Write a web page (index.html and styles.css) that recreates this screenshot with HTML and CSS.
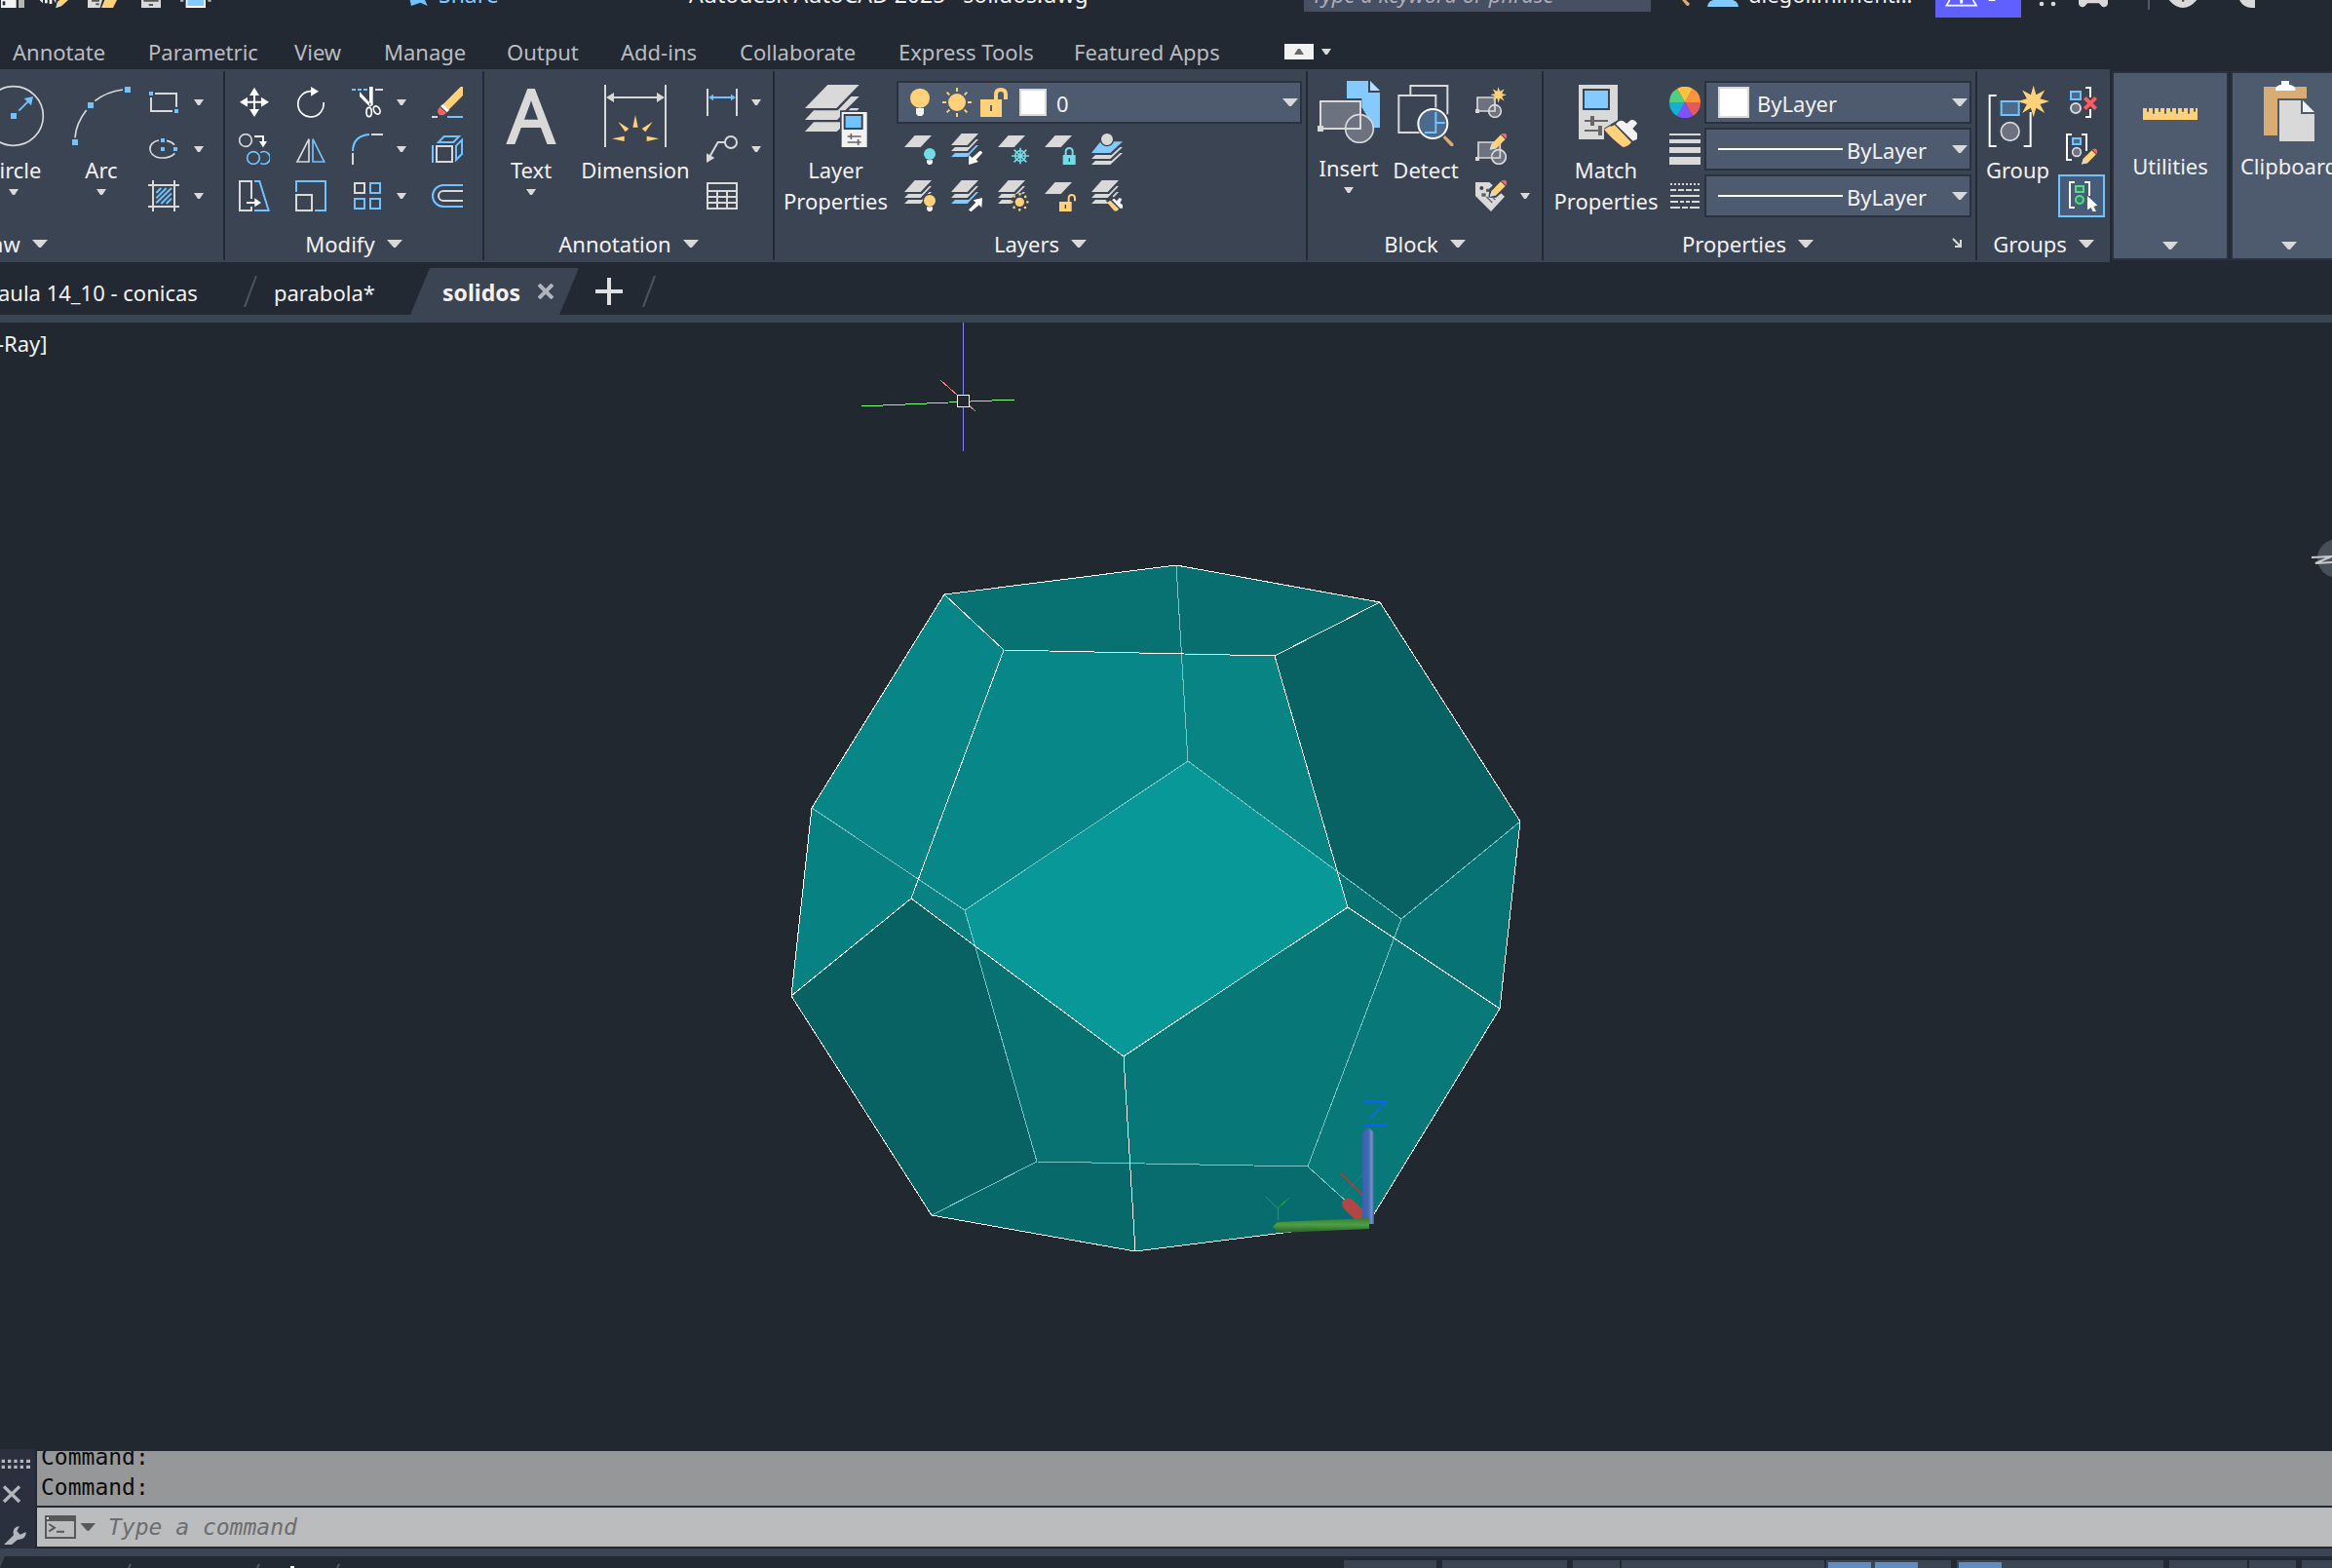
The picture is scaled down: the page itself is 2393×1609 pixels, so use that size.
FILE: index.html
```html
<!DOCTYPE html>
<html lang="en">
<head>
<meta charset="utf-8">
<title>Autodesk AutoCAD 2025 - solidos.dwg</title>
<link rel="stylesheet" href="styles.css">
</head>
<body>
<svg class="defs" aria-hidden="true">
  <defs>
    <symbol id="drop" viewBox="0 0 10 6"><path d="M0 0H10L6 6H4Z" fill="#d9d9d9"/></symbol>
    <symbol id="drop-lg" viewBox="0 0 16 8"><path d="M0 0H16L9 8H7Z" fill="#d9d9d9"/></symbol>
    <symbol id="sheet" viewBox="0 0 84 36"><path d="M0 36L32 0H84L50 36Z" fill="#d9d9d9"/></symbol>
    <symbol id="stack" viewBox="0 0 84 72"><g fill="#d9d9d9"><path d="M0 36L32 0H84L50 36Z"/><path d="M0 54L12 42H54L77 18H84L50 54Z"/><path d="M0 72L12 60H54L77 36H84L50 72Z"/></g></symbol>
    <symbol id="stack-blue" viewBox="0 0 84 72"><g fill="#d9d9d9"><path d="M0 36L32 0H84L50 36Z"/><path d="M0 54L12 42H54L77 18H84L50 54Z"/></g><path d="M0 72L12 60H54L77 36H84L50 72Z" fill="#85caff"/></symbol>
    <symbol id="pencil" viewBox="0 0 54 54"><path d="M0 52L6 34L34 6L48 20L20 48Z" fill="#ffd17a"/><path d="M0 52L6 34L20 48Z" fill="#d9d9d9"/><path d="M36 4Q42 -3 50 3Q57 11 50 18Z" fill="#ff6161"/></symbol>
    <symbol id="star8" viewBox="0 0 96 96"><path d="M48 0L56 28L82 14L68 40L96 48L68 57L82 83L56 68L48 96L40 68L14 83L28 57L0 48L28 40L14 14L40 28Z" fill="#ffd17a"/></symbol>
  </defs>
</svg>

<header class="titlebar">
  <div class="quick">
    <svg width="220" height="8" viewBox="0 0 660 24"><path d="M3 0H50V24H3Z" fill="#f2f2f2"/><path d="M8 4H16V16H8Z" fill="#222933"/><path d="M57 0H75V24H57Z" fill="#b5b5b5"/><path d="M122 0L132 10V0ZM138 0H146V10H138ZM152 0H160V12H152ZM166 0H172V10Z" fill="#f2f2f2"/><path d="M172 24L178 4L184 0H210L190 18Z" fill="#ffd17a"/><path d="M172 24L177 6L188 19Z" fill="#d9d9d9"/><path d="M270 0H315L308 24H270Z" fill="#d9d9d9"/><path d="M282 0H306V5H282ZM295 10H305V16H295Z" fill="#555"/><path d="M312 24L322 0H360L348 24Z" fill="#ffd17a"/><path d="M435 0H495V24H435Z" fill="#d9d9d9"/><path d="M442 0H488V5H442ZM458 12H471V18H458Z" fill="#555"/><path d="M555 0H565V5H555ZM640 0H650V5H640Z" fill="#b5b5b5"/><path d="M572 0H633V24H572Z" fill="#fff"/><path d="M577 0H628V18H577Z" fill="#85caff"/></svg>
  </div>
  <button class="share"><svg width="20" height="8" viewBox="0 0 60 24"><path d="M2 0H48L56 18L34 8L6 18Z" fill="#71c3ff"/></svg>Share</button>
  <h1 class="app-title">Autodesk AutoCAD 2025&nbsp;&nbsp; solidos.dwg</h1>
  <input class="search" type="text" aria-label="Search help" placeholder="Type a keyword or phrase">
  <div class="account">
    <svg width="58" height="8" viewBox="0 0 174 24"><path d="M0 0H12L24 11L20 18L14 17Z" fill="#dbab74"/><path d="M78 21C80 8 86 3 96 0H156C166 3 172 8 174 21Z" fill="#85caff"/></svg>
    <span>diegol.miment...</span>
  </div>
  <button class="trial" aria-label="Trial status"><svg width="88" height="18" viewBox="0 0 264 54"><path d="M44 0L34 17H126L116 0M78 0H82V8H78Z" fill="none" stroke="#fff" stroke-width="5"/><path d="M164 0H184V3H164Z" fill="#fff"/></svg></button>
  <svg width="240" height="12" viewBox="0 0 720 36"><g fill="#d9d9d9"><circle cx="63" cy="12" r="7"/><circle cx="99" cy="12" r="7"/><path d="M177 0H267V12A12 12 0 0 1 245 16L240 10H204L199 16A12 12 0 0 1 177 12Z"/><path d="M455 0H541Q520 24 498 24Q476 24 455 0ZM672 0H762V24H710Q685 24 672 0Z"/></g><path d="M390 0H396V30H390Z" fill="#4e5a6d"/><path d="M495 0H502V5H495Z" fill="#444"/></svg>
</header>

<nav class="menu">
  <button>Annotate</button><button>Parametric</button><button>View</button><button>Manage</button><button>Output</button><button>Add-ins</button><button>Collaborate</button><button>Express Tools</button><button>Featured Apps</button>
  <button class="collapse" aria-label="Minimize ribbon"><svg width="30" height="16" viewBox="0 0 30 16"><path d="M0 0H30V16H0Z" fill="#f2f2f2"/><path d="M10 11L14 5H16L20 11Z" fill="#666"/></svg><svg width="10" height="6"><use href="#drop"/></svg></button>
</nav>

<main class="ribbon">
  <section class="panel draw">
    <div class="body">
      <button class="big circle"><svg width="64" height="64" viewBox="-54 261 192 192"><circle cx="42" cy="357" r="91" fill="none" stroke="#d9d9d9" stroke-width="5"/><path d="M33 348H51V366H33ZM102 297L96 325L87 316L60 343L56 339L83 312L74 303Z" fill="#71c3ff"/></svg><span>Circle</span><svg width="10" height="6"><use href="#drop"/></svg></button>
      <button class="big arc"><svg width="64" height="64" viewBox="222 261 192 192"><path d="M237 424Q240 380 272 339M298 311Q335 282 384 276" fill="none" stroke="#d9d9d9" stroke-width="5"/><path d="M228 429H246V447H228ZM276 315H294V333H276ZM390 267H408V285H390Z" fill="#71c3ff"/></svg><span>Arc</span><svg width="10" height="6"><use href="#drop"/></svg></button>
      <div class="tools cols-draw">
        <button aria-label="Rectangle"><svg width="32" height="32" viewBox="459 267 96 96"><path d="M480 288H546V329M534 342H468V300" fill="none" stroke="#d9d9d9" stroke-width="6"/><path d="M462 282H474V294H462ZM540 336H552V348H540Z" fill="#71c3ff"/></svg></button>
        <button aria-label="Rectangle options"><svg width="10" height="6"><use href="#drop"/></svg></button>
        <button aria-label="Ellipse"><svg width="32" height="32" viewBox="459 411 96 96"><path d="M492 432C455 438 455 480 496 486C520 487 534 480 541 472M516 433Q532 436 540 446" fill="none" stroke="#d9d9d9" stroke-width="5"/><path d="M498 426H510V438H498ZM498 453H510V465H498ZM537 453H549V465H537Z" fill="#71c3ff"/></svg></button>
        <button aria-label="Ellipse options"><svg width="10" height="6"><use href="#drop"/></svg></button>
        <button aria-label="Hatch"><svg width="32" height="32" viewBox="459 555 96 96"><path d="M459 570H555M459 636H555M474 555V651M540 555V651" stroke="#d9d9d9" stroke-width="6"/><path d="M484 594L499 579M484 610L515 579M484 625L531 579M499 627L531 595M515 627L531 611" stroke="#71c3ff" stroke-width="6"/></svg></button>
        <button aria-label="Hatch options"><svg width="10" height="6"><use href="#drop"/></svg></button>
      </div>
    </div>
    <button class="title">Draw<svg width="16" height="8"><use href="#drop-lg"/></svg></button>
  </section>

  <section class="panel">
    <div class="body">
      <div class="tools cols-modify">
        <button aria-label="Move"><svg width="32" height="32" viewBox="735 267 96 96"><path d="M783 269L798 294H786V311H804V299L828 314L804 329V317H786V336H798L783 360L768 336H780V317H762V329L738 314L762 299V311H780V294H768Z" fill="#fff"/></svg></button>
        <button aria-label="Rotate"><svg width="32" height="32" viewBox="909 267 96 96"><path d="M996 315A39.500 39.500 0 1 1 958 281" fill="none" stroke="#fff" stroke-width="5"/><path d="M957 267L981 281L957 296Z" fill="#fff"/></svg></button>
        <button aria-label="Trim"><svg width="32" height="32" viewBox="1083 267 96 96"><path d="M1083 276H1095M1101 276H1113M1119 276H1131" stroke="#71c3ff" stroke-width="6"/><path d="M1155 276H1179" stroke="#d9d9d9" stroke-width="6"/><path d="M1107 282V297L1136 326L1142 320ZM1137 267H1148V324L1137 330Z" fill="#fff"/><ellipse cx="1136" cy="345" rx="8" ry="14" fill="none" stroke="#fff" stroke-width="5"/><ellipse cx="1160" cy="339" rx="9" ry="13" transform="rotate(-30 1160 339)" fill="none" stroke="#fff" stroke-width="5"/></svg></button>
        <button aria-label="Trim options"><svg width="10" height="6"><use href="#drop"/></svg></button>
        <button aria-label="Erase"><svg width="32" height="32" viewBox="1329 267 96 96"><path d="M1425 267V294L1381 338L1364 321L1418 267Z" fill="#ffd17a"/><path d="M1364 320L1383 339L1376 346L1356 327Z" fill="#fff"/><path d="M1354 329Q1343 340 1350 350Q1360 361 1374 348Z" fill="#ff6161"/><path d="M1329 360H1347" stroke="#d9d9d9" stroke-width="6"/><path d="M1377 360H1425" stroke="#71c3ff" stroke-width="6"/></svg></button>

        <button aria-label="Copy"><svg width="32" height="32" viewBox="735 411 96 96"><circle cx="756" cy="432" r="19" fill="none" stroke="#d9d9d9" stroke-width="5"/><path d="M783 420H810V435" fill="none" stroke="#fff" stroke-width="6"/><path d="M798 435H822L810 454Z" fill="#fff"/><circle cx="780" cy="486" r="19" fill="none" stroke="#71c3ff" stroke-width="5"/><path d="M802 470A19 19 0 1 1 802 502" fill="none" stroke="#71c3ff" stroke-width="5"/></svg></button>
        <button aria-label="Mirror"><svg width="32" height="32" viewBox="909 411 96 96"><path d="M951 428V498H915Z" fill="none" stroke="#d9d9d9" stroke-width="5"/><path d="M963 428V498H998Z" fill="none" stroke="#71c3ff" stroke-width="5"/></svg></button>
        <button aria-label="Fillet"><svg width="32" height="32" viewBox="1083 411 96 96"><path d="M1086 465Q1087 418 1137 414" fill="none" stroke="#71c3ff" stroke-width="6"/><path d="M1143 414H1179M1086 471V507" stroke="#d9d9d9" stroke-width="6"/></svg></button>
        <button aria-label="Fillet options"><svg width="10" height="6"><use href="#drop"/></svg></button>
        <button aria-label="Explode"><svg width="32" height="32" viewBox="1329 411 96 96"><path d="M1344 450H1392V498H1344Z" fill="none" stroke="#d9d9d9" stroke-width="6"/><path d="M1332 447V501M1350 438L1367 420H1413L1396 438ZM1404 449L1422 431V474L1404 492Z" fill="none" stroke="#71c3ff" stroke-width="6"/></svg></button>

        <button aria-label="Stretch"><svg width="32" height="32" viewBox="735 555 96 96"><path d="M774 612V558H738V648H774V636" fill="none" stroke="#d9d9d9" stroke-width="6"/><path d="M783 558H799L827 648H783" fill="none" stroke="#71c3ff" stroke-width="6"/><path d="M759 621H784V610L804 624L784 637V627H759Z" fill="#fff"/></svg></button>
        <button aria-label="Scale"><svg width="32" height="32" viewBox="909 555 96 96"><path d="M912 591V558H1002V648H969" fill="none" stroke="#71c3ff" stroke-width="6"/><path d="M912 600H960V648H912Z" fill="none" stroke="#d9d9d9" stroke-width="6"/></svg></button>
        <button aria-label="Array"><svg width="32" height="32" viewBox="1083 555 96 96"><path d="M1092 564H1122V594H1092Z" fill="none" stroke="#d9d9d9" stroke-width="6"/><path d="M1140 564H1170V594H1140ZM1092 612H1122V642H1092ZM1140 612H1170V642H1140Z" fill="none" stroke="#71c3ff" stroke-width="6"/></svg></button>
        <button aria-label="Array options"><svg width="10" height="6"><use href="#drop"/></svg></button>
        <button aria-label="Offset"><svg width="32" height="32" viewBox="1329 555 96 96"><path d="M1425 570H1365A33 33 0 0 0 1365 636H1425" fill="none" stroke="#71c3ff" stroke-width="6"/><path d="M1425 588H1365A15 15 0 0 0 1365 618H1425" fill="none" stroke="#d9d9d9" stroke-width="6"/></svg></button>
      </div>
    </div>
    <button class="title">Modify<svg width="16" height="8"><use href="#drop-lg"/></svg></button>
  </section>

  <section class="panel annotation">
    <div class="body">
      <button class="big w96"><svg width="64" height="64" viewBox="0 0 64 64"><text class="glyph" x="32" y="60" text-anchor="middle">A</text></svg><span>Text</span><svg width="10" height="6"><use href="#drop"/></svg></button>
      <button class="big w118"><svg width="64" height="64" viewBox="420 261 192 192"><path d="M423 261V453M609 261V453M440 300H592" stroke="#d9d9d9" stroke-width="6"/><path d="M426 300L450 285V315ZM606 300L582 285V315Z" fill="#d9d9d9"/><path d="M516 354L524 392H508ZM463 375L496 396L485 406ZM569 375L547 406L536 396ZM444 427L482 419V435ZM589 427L551 419V435Z" fill="#ffd17a"/></svg><span>Dimension</span></button>
      <div class="tools cols-side">
        <button aria-label="Linear"><svg width="32" height="32" viewBox="735 267 96 96"><path d="M738 273V357M828 273V357" stroke="#d9d9d9" stroke-width="6"/><path d="M741 300L756 290V297H810V290L825 300L810 310V303H756V310Z" fill="#71c3ff"/></svg></button>
        <button aria-label="Linear options"><svg width="10" height="6"><use href="#drop"/></svg></button>
        <button aria-label="Leader"><svg width="32" height="32" viewBox="735 411 96 96"><circle cx="810" cy="438" r="18" fill="none" stroke="#d9d9d9" stroke-width="6"/><path d="M790 438H770L746 480" fill="none" stroke="#d9d9d9" stroke-width="6"/><path d="M735 472L760 486L735 501Z" fill="#d9d9d9"/></svg></button>
        <button aria-label="Leader options"><svg width="10" height="6"><use href="#drop"/></svg></button>
        <button aria-label="Table"><svg width="32" height="32" viewBox="735 555 96 96"><path d="M738 564H828V642H738ZM738 588H828M738 606H828M738 624H828M768 588V642M798 588V642" fill="none" stroke="#d9d9d9" stroke-width="6"/></svg></button>
      </div>
    </div>
    <button class="title">Annotation<svg width="16" height="8"><use href="#drop-lg"/></svg></button>
  </section>

  <section class="panel layers">
    <div class="body">
      <button class="big w125"><svg width="64" height="64" viewBox="1042 261 192 192"><g fill="#d9d9d9"><path d="M1042 333L1112 261H1209L1139 333ZM1042 369L1069 340H1143L1184 297H1209L1166 340H1150V360L1141 369ZM1042 405L1069 376H1150V396L1140 405ZM1176 340L1183 333H1209L1203 340Z"/></g><path d="M1155 345H1233V453H1155Z" fill="#f2f2f2"/><path d="M1164 354H1218V396H1164Z" fill="#71c3ff" stroke="#3b4453" stroke-width="6"/><path d="M1173 420H1215M1173 438H1215" stroke="#666" stroke-width="5"/><path d="M1184 411V429M1206 429V447" stroke="#666" stroke-width="5"/></svg><span>Layer<br>Properties</span></button>
      <div class="layer-tools">
        <label class="combo layer-combo">
          <svg width="144" height="32" viewBox="102 267 432 96"><circle cx="132" cy="302" r="30" fill="#ffd17a"/><path d="M120 333H144V350L138 357H126L120 350Z" fill="#f2f2f2"/><circle cx="246" cy="315" r="27" fill="#ffd17a"/><path d="M201 315H213M279 315H291M246 270V282M246 348V360M215 284L223 292M277 284L269 292M215 346L223 338M277 346L269 338" stroke="#ffd17a" stroke-width="6"/><path d="M318 306H360V291Q360 270 381 270Q402 270 402 291V306H390V291Q390 282 381 282Q372 282 372 291V306H384V360H318Z" fill="#ffd17a"/><path d="M348 324H354V342H348Z" fill="#4e5a6d"/><path d="M441 276H519V354H441Z" fill="#fff" stroke="#d9d9d9" stroke-width="6"/></svg>
          <select aria-label="Layer"><option>0</option></select>
          <svg width="16" height="8"><use href="#drop-lg"/></svg>
        </label>
        <div class="tools cols-layers">
          <button aria-label="Layer off"><svg width="32" height="32" viewBox="0 0 96 96"><use href="#sheet" y="6" width="84" height="36"/><circle cx="78" cy="63" r="18" fill="#71dbe6"/><path d="M69 82H87V90L82 96H74L69 90Z" fill="#f2f2f2"/></svg></button>
          <button aria-label="Isolate"><svg width="32" height="32" viewBox="0 0 96 96"><use href="#stack-blue" width="84" height="72"/><path d="M92 54L97 59L77 80L84 87L54 96L55 66L65 75L88 54Z" fill="#fff"/></svg></button>
          <button aria-label="Freeze"><svg width="32" height="32" viewBox="0 0 96 96"><use href="#sheet" y="6" width="84" height="36"/><g stroke="#71dbe6" stroke-width="5" fill="none"><path d="M69 44V94M42 69H96M50 50L88 88M88 50L50 88"/><circle cx="69" cy="69" r="16"/></g></svg></button>
          <button aria-label="Lock"><svg width="32" height="32" viewBox="0 0 96 96"><use href="#sheet" y="6" width="84" height="36"/><path d="M56 66H95V96H56Z" fill="#71dbe6"/><path d="M65 66V54Q66 45 76 45Q85 45 86 54V66" fill="none" stroke="#71dbe6" stroke-width="6"/><path d="M76 76V87" stroke="#3b4453" stroke-width="4"/></svg></button>
          <button aria-label="Make current"><svg width="32" height="32" viewBox="0 0 96 96"><path d="M0 60L28 25H96L58 60Z" fill="#85caff"/><path d="M0 78L12 66H62L88 42H96L58 78ZM0 96L12 84H62L88 60H96L58 96Z" fill="#d9d9d9"/><circle cx="48" cy="18" r="20" fill="#d9d9d9" stroke="#3b4453" stroke-width="4"/></svg></button>

          <button aria-label="Turn all layers on"><svg width="32" height="32" viewBox="0 0 96 96"><use href="#stack" width="84" height="72"/><circle cx="78" cy="63" r="20" fill="#ffd17a" stroke="#3b4453" stroke-width="4"/><path d="M69 82H87V90L82 96H74L69 90Z" fill="#f2f2f2"/></svg></button>
          <button aria-label="Unisolate"><svg width="32" height="32" viewBox="0 0 96 96"><use href="#stack-blue" width="84" height="72"/><path d="M96 54L94 84L86 76L61 97L54 91L76 68L68 61Z" fill="#fff"/></svg></button>
          <button aria-label="Thaw all layers"><svg width="32" height="32" viewBox="0 0 96 96"><use href="#stack" width="84" height="72"/><circle cx="67" cy="67" r="27" fill="#3b4453"/><circle cx="67" cy="67" r="14" fill="#ffd17a"/><circle cx="67" cy="67" r="24" fill="none" stroke="#ffd17a" stroke-width="8" stroke-dasharray="0 18.850" stroke-linecap="round"/></svg></button>
          <button aria-label="Unlock"><svg width="32" height="32" viewBox="0 0 96 96"><use href="#sheet" y="6" width="84" height="36"/><path d="M45 66H83V96H45Z" fill="#ffd17a"/><path d="M74 66V54Q75 45 83 45Q92 45 93 54V64" fill="none" stroke="#ffd17a" stroke-width="6"/><path d="M64 75V87" stroke="#3b4453" stroke-width="4"/></svg></button>
          <button aria-label="Match layer"><svg width="32" height="32" viewBox="0 0 96 96"><use href="#stack" width="84" height="72"/><path d="M44 62L64 48L98 80V96H74Z" fill="#3b4453"/><path d="M48 68L58 62L84 88Q80 98 70 94Z" fill="#ffd17a"/><path d="M63 60L70 56L78 64L86 54L94 58L88 70L96 76V86L88 86Z" fill="#f2f2f2"/></svg></button>
        </div>
      </div>
    </div>
    <button class="title">Layers<svg width="16" height="8"><use href="#drop-lg"/></svg></button>
  </section>

  <section class="panel block">
    <div class="body">
      <button class="big raised w84"><svg width="64" height="64" viewBox="36 249 192 192"><path d="M126 249H192V285H228V393H210L172 330V303H126Z" fill="#85caff"/><path d="M198 249L228 279H198Z" fill="#b9deff"/><path d="M45 312H168V396H45Z" fill="#6c7280" stroke="#d9d9d9" stroke-width="6"/><circle cx="165" cy="396" r="43" fill="#6c7280" stroke="#d9d9d9" stroke-width="5"/><path d="M168 352V396H123" fill="none" stroke="#d9d9d9" stroke-width="6"/><path d="M36 387H54V405H36Z" fill="#d9d9d9"/></svg><span>Insert</span><svg width="10" height="6"><use href="#drop"/></svg></button>
      <button class="big w74"><svg width="64" height="64" viewBox="275 261 192 192"><path d="M324 291V264H438V352M288 294H402V408H288Z" fill="none" stroke="#d9d9d9" stroke-width="6"/><circle cx="393" cy="381" r="50" fill="#3b4453"/><circle cx="393" cy="381" r="45" fill="#4b6a8c" stroke="#fff" stroke-width="6"/><path d="M402 345V408H368M402 378H430" fill="none" stroke="#71c3ff" stroke-width="6"/><path d="M424 424L430 417L456 442V450H448Z" fill="#dbab74"/></svg><span>Detect</span></button>
      <div class="tools cols-side">
        <button aria-label="Create block"><svg width="32" height="32" viewBox="522 267 96 96"><path d="M528 300H582V342H528Z" fill="#6c7280" stroke="#d9d9d9" stroke-width="5"/><circle cx="582" cy="342" r="19" fill="#6c7280" stroke="#d9d9d9" stroke-width="5"/><path d="M582 318V342H560" fill="none" stroke="#d9d9d9" stroke-width="5"/><path d="M522 336H534V348H522Z" fill="#d9d9d9"/><use href="#star8" x="568" y="267" width="50" height="50"/></svg></button><span></span>
        <button aria-label="Edit block"><svg width="32" height="32" viewBox="522 411 96 96"><path d="M531 438H598V486H531Z" fill="#6c7280" stroke="#d9d9d9" stroke-width="5"/><circle cx="594" cy="483" r="22" fill="#6c7280" stroke="#d9d9d9" stroke-width="5"/><path d="M598 460V486H574" fill="none" stroke="#d9d9d9" stroke-width="5"/><path d="M522 483H534V495H522Z" fill="#d9d9d9"/><use href="#pencil" x="566" y="409" width="54" height="54"/></svg></button><span></span>
        <button aria-label="Edit attributes"><svg width="32" height="32" viewBox="522 555 96 96"><path d="M522 561H565L612 605L570 651L522 603Z" fill="#d9d9d9"/><circle cx="541" cy="579" r="6" fill="#3b4453"/><path d="M543 597H552V603H543ZM557 583H566V589H557ZM556 606L574 624M574 606L583 615" fill="#3b4453" stroke="#666" stroke-width="4"/><path d="M562 608L566 580L598 549L622 575L586 608Z" fill="#3b4453"/><use href="#pencil" x="566" y="553" width="54" height="54"/></svg></button>
        <button aria-label="Attribute options"><svg width="10" height="6"><use href="#drop"/></svg></button>
      </div>
    </div>
    <button class="title">Block<svg width="16" height="8"><use href="#drop-lg"/></svg></button>
  </section>

  <section class="panel properties">
    <div class="body">
      <button class="big w128"><svg width="64" height="64" viewBox="828 261 192 192"><path d="M840 261H960V370L918 395V429H840Z" fill="#d9d9d9"/><path d="M855 276H933V336H855Z" fill="#85caff" stroke="#3b4453" stroke-width="6"/><path d="M858 372H930M858 402H912" stroke="#666" stroke-width="6"/><path d="M882 357V387M906 387V417" stroke="#666" stroke-width="12"/><path d="M918 398L936 388Q942 390 950 384L1002 438Q992 452 976 453Q940 425 918 398Z" fill="#ffd17a"/><path d="M954 382Q964 368 976 372L988 380L1000 370Q1012 366 1020 380L1006 396L1020 410V428L1007 434Z" fill="#f2f2f2"/></svg><span>Match<br>Properties</span></button>
      <div class="props">
        <svg width="32" height="32" viewBox="-48 -48 96 96"><path d="M0 0L-24 -42A48 48 0 0 1 24 -42Z" fill="#ffc23e"/><path d="M0 0L24 -42A48 48 0 0 1 48 0Z" fill="#ff9440"/><path d="M0 0H48A48 48 0 0 1 24 42Z" fill="#e65a5a"/><path d="M0 0L24 42A48 48 0 0 1 -24 42Z" fill="#8250ff"/><path d="M0 0L-24 42A48 48 0 0 1 -48 0Z" fill="#14b0cf"/><path d="M0 0H-48A48 48 0 0 1 -24 -42Z" fill="#52ce82"/></svg>
        <label class="combo"><i class="swatch"></i><select aria-label="Object color"><option>ByLayer</option></select><svg width="16" height="8"><use href="#drop-lg"/></svg></label>
        <svg width="32" height="32" viewBox="0 0 32 32"><path d="M0 0H32V2H0ZM0 6H32V10H0ZM0 14H32V20H0ZM0 24H32V32H0Z" fill="#d9d9d9"/></svg>
        <label class="combo"><i class="line"></i><select class="narrow" aria-label="Lineweight"><option>ByLayer</option></select><svg width="16" height="8"><use href="#drop-lg"/></svg></label>
        <svg width="32" height="32" viewBox="0 0 32 32"><g stroke="#d9d9d9" stroke-width="2"><path d="M1 4H31" stroke-dasharray="2 2"/><path d="M1 10H31" stroke-dasharray="6 2"/><path d="M1 16H31"/><path d="M1 22H31" stroke-dasharray="8 2 4 2 4 2"/><path d="M1 28H31" stroke-dasharray="10 2 6 2"/></g></svg>
        <label class="combo"><i class="line"></i><select class="narrow" aria-label="Linetype"><option>ByLayer</option></select><svg width="16" height="8"><use href="#drop-lg"/></svg></label>
      </div>
    </div>
    <div class="title-row">
      <button class="title">Properties<svg width="16" height="8"><use href="#drop-lg"/></svg></button>
      <button class="launcher" aria-label="Properties palette"><svg width="10" height="10" viewBox="0 0 10 10"><path d="M1 1L8 8M3 9H9V2" fill="none" stroke="#d9d9d9" stroke-width="2"/></svg></button>
    </div>
  </section>

  <section class="panel groups">
    <div class="body">
      <button class="big w83"><svg width="64" height="64" viewBox="58 261 192 192"><path d="M87 294H66V450H87M171 450H192V345" fill="none" stroke="#fff" stroke-width="6"/><path d="M102 312H156V354H102Z" fill="#4b6a8c" stroke="#71c3ff" stroke-width="6"/><circle cx="129" cy="405" r="28" fill="#6c7280" stroke="#d9d9d9" stroke-width="5"/><use href="#star8" x="152" y="263" width="98" height="98"/></svg><span>Group</span></button>
      <div class="tools cols-groups">
        <button aria-label="Ungroup"><svg width="32" height="32" viewBox="303 267 96 96"><path d="M363 270H378V300M378 336V360H363" fill="none" stroke="#fff" stroke-width="6"/><path d="M318 282H348V306H318Z" fill="#4b6a8c" stroke="#71c3ff" stroke-width="6"/><circle cx="333" cy="333" r="15" fill="#6c7280" stroke="#d9d9d9" stroke-width="6"/><path d="M361 301L395 335M395 301L361 335" stroke="#ff5c5c" stroke-width="12"/></svg></button>
        <button aria-label="Group edit"><svg width="32" height="32" viewBox="303 411 96 96"><path d="M321 414H306V492H321M351 414H366V465" fill="none" stroke="#fff" stroke-width="6"/><path d="M324 426H348V444H324Z" fill="#4b6a8c" stroke="#71c3ff" stroke-width="6"/><circle cx="336" cy="468" r="13" fill="#6c7280" stroke="#d9d9d9" stroke-width="5"/><use href="#pencil" x="351" y="457" width="50" height="50"/></svg></button>
        <button class="active" aria-label="Group selection"><svg width="32" height="32" viewBox="300 552 96 96"><path d="M327 558H312V636H327M357 558H372V600" fill="none" stroke="#fff" stroke-width="6"/><path d="M330 570H354V588H330Z" fill="#3d7a72" stroke="#58d888" stroke-width="6"/><circle cx="342" cy="612" r="12" fill="#3d7a72" stroke="#58d888" stroke-width="6"/><path d="M366 600L398 630L385 632L393 648L384 651L377 636L366 643Z" fill="#fff"/></svg></button>
      </div>
    </div>
    <button class="title">Groups<svg width="16" height="8"><use href="#drop-lg"/></svg></button>
  </section>

  <section class="folded">
    <button class="big"><svg width="64" height="64" viewBox="525 243 192 192"><path d="M537 333H549V344H555V333H567V350H573V333H585V344H591V333H603V350H609V333H621V344H627V333H639V350H645V333H657V344H663V333H675V350H681V333H693V344H699V333H705V369H537Z" fill="#ffd17a"/></svg><span>Utilities</span><svg width="16" height="8"><use href="#drop-lg"/></svg></button>
  </section>
  <section class="folded">
    <button class="big"><svg width="64" height="64" viewBox="891 243 192 192"><path d="M909 267H1041V303H951V417H909Z" fill="#d8ad75"/><path d="M945 273Q948 262 963 261V249H987V261Q1002 262 1006 273V279H945Z" fill="#fff"/><path d="M957 309H1023V351H1065V441H957Z" fill="#d9d9d9"/><path d="M1029 309L1065 345H1029Z" fill="#f2f2f2"/></svg><span>Clipboard</span><svg width="16" height="8"><use href="#drop-lg"/></svg></button>
  </section>
</main>

<nav class="doc-tabs">
  <button class="doc first">aula 14_10 - conicas</button>
  <svg width="14" height="32" viewBox="0 0 14 32"><path d="M1 32L13 0" stroke="#4b5563" stroke-width="2"/></svg>
  <button class="doc second">parabola*</button>
  <div class="doc-active"><button class="doc">solidos</button><button aria-label="Close solidos"><svg width="16" height="16" viewBox="0 0 16 16"><path d="M1 1L15 15M15 1L1 15" stroke="#b0b5bd" stroke-width="4"/></svg></button></div>
  <button class="new-tab" aria-label="New drawing"><svg width="28" height="28" viewBox="0 0 28 28"><path d="M14 0V28M0 14H28" stroke="#e0e0e0" stroke-width="4"/></svg></button>
  <svg width="14" height="32" viewBox="0 0 14 32"><path d="M1 32L13 0" stroke="#4b5563" stroke-width="2"/></svg>
</nav>

<section class="viewport">
  <button class="view-style">-Ray]</button>
  <svg class="canvas" viewBox="0 331 2393 1156">
    <g shape-rendering="crispEdges">
      <path d="M969 610L1207 580L1213 670L1030 667Z" fill="#087172"/>
      <path d="M1207 580L1416 618L1308 673L1213 670Z" fill="#086e6f"/>
      <path d="M969 610L1030 667L942 901L833 829Z" fill="#088586"/>
      <path d="M833 829L942 901L935 922L812 1022Z" fill="#088182"/>
      <path d="M1030 667L1213 670L1219 781L990 934L942 901Z" fill="#088788"/>
      <path d="M942 901L990 934L1000 971L935 922Z" fill="#088283"/>
      <path d="M1213 670L1308 673L1372 893L1219 781Z" fill="#088485"/>
      <path d="M1219 781L1372 893L1383 931L1153 1084L1000 971L990 934Z" fill="#089898"/>
      <path d="M1308 673L1416 618L1560 843L1438 943L1372 893Z" fill="#086162"/>
      <path d="M1372 893L1438 943L1430 962L1383 931Z" fill="#087273"/>
      <path d="M1438 943L1560 843L1539 1035L1430 962Z" fill="#087374"/>
      <path d="M935 922L1000 971L1064 1192L956 1247L812 1022Z" fill="#086162"/>
      <path d="M1000 971L1153 1084L1159 1195L1064 1192Z" fill="#087172"/>
      <path d="M1064 1192L1159 1195L1165 1284L956 1247Z" fill="#08696b"/>
      <path d="M1153 1084L1383 931L1430 962L1342 1197L1159 1195Z" fill="#087778"/>
      <path d="M1430 962L1539 1035L1405 1254L1342 1197Z" fill="#087879"/>
      <path d="M1159 1195L1342 1197L1405 1254L1165 1284Z" fill="#086c6e"/>
      <g fill="none" stroke="#7dc4c4">
        <path d="M1207 580L1219 781L990 934L833 829M1219 781L1438 943L1560 843M990 934L1064 1192L956 1247M1064 1192L1342 1197L1438 943M1342 1197L1405 1254"/>
      </g>
      <g fill="none" stroke="#fff">
        <path d="M1207 580L1416 618L1560 843L1539 1035L1405 1254L1165 1284L956 1247L812 1022L833 829L969 610ZM969 610L1030 667L1308 673L1416 618M1030 667L935 922L812 1022M935 922L1153 1084L1383 931L1308 673M1383 931L1539 1035M1153 1084L1165 1284"/>
      </g>
      <path d="M988.500 331V463" stroke="#8383ff"/>
      <path d="M884 417L1041 410" stroke="#83ff83"/>
      <path d="M965 390L1001 422" stroke="#ff8383"/>
      <path d="M982.500 405.500H994.500V417.500H982.500Z" fill="#212830" stroke="#fff"/>
      <g fill="none"><path d="M1399 1130H1423L1400 1154H1423" stroke="#0a66ff"/><path d="M1376 1204L1398 1226M1398 1206L1376 1228" stroke="#e0302a"/><path d="M1299 1228L1311 1240L1323 1229M1311 1240V1252" stroke="#18a82c"/></g>
    </g>
    <defs>
      <linearGradient id="axis-z"><stop offset="0" stop-color="#3b62a8"/><stop offset=".5" stop-color="#4169b4"/><stop offset=".8" stop-color="#7491c8"/><stop offset="1" stop-color="#45598a"/></linearGradient>
      <linearGradient id="axis-y" x2="0" y2="1"><stop offset="0" stop-color="#3c7a34"/><stop offset=".45" stop-color="#4ba145"/><stop offset="1" stop-color="#2c5a28"/></linearGradient>
    </defs>
    <path d="M1377 1233L1383 1229L1388 1231L1402 1245L1396 1252H1391L1378 1239Z" fill="#b04747"/>
    <path d="M1398 1162L1404 1157L1410 1162V1256H1398Z" fill="url(#axis-z)"/>
    <path d="M1306 1259L1311 1254L1405 1250V1261L1313 1265Z" fill="url(#axis-y)"/>
    <ellipse cx="2399" cy="573" rx="21" ry="20" fill="#474f58"/>
    <path d="M2372 572L2393 571L2376 578L2393 577" fill="none" stroke="#c8cacc" stroke-width="2"/>
  </svg>
</section>

<section class="command">
  <div class="grip">
    <svg width="36" height="102" viewBox="0 0 108 306"><g fill="#b3b6bc"><path d="M5 32H15V42H5ZM24 32H34V42H24ZM43 32H53V42H43ZM62 32H72V42H62ZM81 32H93V42H81ZM5 50H15V60H5ZM24 50H34V60H24ZM43 50H53V60H43ZM62 50H72V60H62ZM81 50H93V60H81Z"/><path d="M12 294L42 265Q36 240 60 237L52 252L62 263L80 255Q82 278 54 279L36 294Z"/></g><path d="M12 115L60 162M60 115L12 162" stroke="#b3b6bc" stroke-width="10"/></svg>
  </div>
  <div class="console">
    <div class="history"><p>Command:</p><p>Command:</p></div>
    <div class="prompt">
      <button aria-label="Recent commands"><svg width="52" height="24" viewBox="0 0 156 72"><path d="M0 0H96V72H0Z" fill="#58595b"/><path d="M6 18H90V66H6Z" fill="#bbbcbe"/><path d="M6 6H12V12H6Z" fill="#fff"/><path d="M13 27L30 38L13 49M36 50H60" fill="none" stroke="#58595b" stroke-width="6"/><path d="M109 24H156L136 47H130Z" fill="#58595b"/></svg></button>
      <input type="text" aria-label="Command line" placeholder="Type a command">
    </div>
  </div>
</section>

<footer class="status">
  <svg class="layout-tabs" width="360" height="12" viewBox="0 0 360 12"><path d="M0 0H5L0 12Z" fill="#3b4453"/><path d="M134 8L132 12M266 8L264 12M348 8L346 12" stroke="#4e5a6d" stroke-width="2"/><path d="M298 10H302V12H298Z" fill="#fff"/></svg>
  <div class="modes">
    <span class="w95"></span><span class="w128"></span><span class="w48 tight"></span><span class="w208 tight"></span>
    <span class="w128"><b></b><b></b></span><span class="w212"><b></b></span><span class="w80 tight"></span><span class="w48"></span><span class="w48"></span>
  </div>
</footer>
</body>
</html>
```
FILE: styles.css
```css
* { box-sizing: border-box; }

body {
  margin: 0;
  min-height: 100vh;
  display: flex;
  flex-direction: column;
  overflow: hidden;
  background: #222933;
  color: #f2f2f2;
  font: 22px/32px "Noto Sans", "Open Sans", sans-serif;
}

button, select, input {
  margin: 0;
  padding: 0;
  border: 0;
  background: none;
  color: inherit;
  font: inherit;
}

svg { display: block; flex: none; }
.defs { position: absolute; width: 0; height: 0; }

/* Title bar, partly scrolled off the top edge */
.titlebar {
  display: flex;
  align-items: center;
  height: 48px;
  margin-top: -30px;
  white-space: nowrap;
  flex: none;
}
.titlebar > svg, .quick, .share svg, .account svg { align-self: flex-end; margin-bottom: 10px; }
.titlebar > svg { margin-bottom: 6px; }
.quick { width: 420px; }
.share { display: flex; align-items: center; gap: 10px; height: 48px; width: 287px; color: #85caff; font-size: 23px; }
.app-title { margin: 0; width: 631px; font-size: 23px; font-weight: 400; }
.search {
  width: 356px;
  height: 36px;
  padding: 0 8px;
  background: #474f63;
  font-style: italic;
}
.search::placeholder { color: #a9aeb8; opacity: 1; }
.account { display: flex; align-items: center; gap: 10px; height: 48px; width: 292px; padding-left: 32px; }
.trial { display: flex; align-items: flex-end; width: 88px; height: 48px; background: #5f60ff; }

.menu {
  display: grid;
  grid-template-columns: 139px 150px 92px 126px 117px 122px 163px 180px 216px auto;
  align-items: center;
  justify-content: start;
  height: 53px;
  padding: 16px 0 0 13px;
  color: #b9bcc0;
  flex: none;
}
.menu button { text-align: left; white-space: nowrap; }
.menu .collapse { display: flex; align-items: center; gap: 8px; }

/* Ribbon */
.ribbon {
  display: flex;
  height: 198px;
  padding: 2px 0;
  background: #3b4453;
  overflow: hidden;
  flex: none;
}
.panel {
  display: flex;
  flex-direction: column;
  flex: none;
  width: 266px;
  border-right: 2px solid #222933;
}
.draw { width: 231px; overflow: hidden; }
.annotation { width: 298px; }
.layers { width: 547px; }
.block { width: 242px; }
.properties { width: 445px; }
.groups { width: 138px; }

.body { display: flex; height: 152px; padding-top: 8px; }
.title {
  display: flex;
  align-items: center;
  justify-content: center;
  gap: 12px;
  height: 42px;
  padding-top: 7px;
}
.draw .title { margin-left: -214px; }
.title-row { display: flex; }
.title-row .title { flex: 1; }
.launcher { width: 24px; padding-top: 6px; }

.big {
  display: flex;
  flex-direction: column;
  align-items: center;
  flex: none;
  width: 100px;
  padding-top: 6px;
  text-align: center;
}
.big span { margin-top: 7px; }
.big span + svg { margin-top: 4px; }
.big.raised { padding-top: 2px; }
.big.raised span, .folded .big span { margin-top: 9px; }
.glyph { font: 76px "Noto Sans", sans-serif; fill: #d9d9d9; stroke: #d9d9d9; stroke-width: 2px; }
.big.circle { margin-left: -36px; }
.big.arc { width: 80px; }
.w74 { width: 74px; }
.w83 { width: 83px; }
.w84 { width: 84px; }
.w96 { width: 96px; }
.w118 { width: 118px; }
.w125 { width: 125px; }
.w128 { width: 128px; }

.tools { display: grid; grid-auto-rows: 48px; align-content: start; }
.tools button { display: grid; place-items: center; }
.cols-draw { grid-template-columns: 48px 24px; }
.cols-modify { grid-template-columns: 58px 58px 58px 12px 82px; padding-left: 1px; }
.cols-side { grid-template-columns: 60px 10px; }
.cols-layers { grid-template-columns: repeat(5, 48px); }
.cols-groups { grid-template-columns: 48px; }
.tools .active { align-self: center; height: 44px; background: #465c78; border: 2px solid #71c3ff; }

.combo {
  display: flex;
  align-items: center;
  height: 44px;
  padding: 0 2px 0 12px;
  background: #4e5a6d;
  border: 2px solid #2b323f;
}
.combo select { flex: 1; min-width: 0; appearance: none; padding-top: 2px; outline: 0; }
.combo .narrow { flex: none; width: 108px; }
.combo option { background: #4e5a6d; }
.layer-tools { width: 416px; padding-top: 2px; }
.layer-combo { margin-bottom: 2px; }
.layer-combo select { padding-left: 6px; }

.props {
  display: grid;
  grid-template-columns: 32px 274px;
  gap: 4px;
  align-items: center;
  align-content: start;
  padding: 2px 0 0 1px;
}
.swatch { width: 32px; height: 32px; margin-right: 8px; background: #fff; border: 2px solid #d9d9d9; }
.line { flex: none; width: 128px; height: 2px; margin-right: 4px; background: #fff; }

.folded {
  flex: none;
  width: 120px;
  margin-right: 2px;
  background: #4e5a6d;
  border: 2px solid #2b323f;
  outline: 2px solid #222933;
}
.folded .big { width: 100%; height: 190px; }
.folded .big span + svg { margin-top: 62px; }

/* Drawing tabs */
.doc-tabs {
  display: flex;
  align-items: center;
  height: 62px;
  padding-top: 6px;
  border-bottom: 8px solid #3b4453;
  flex: none;
  white-space: nowrap;
}
.doc { padding-top: 2px; }
.doc.first { width: 252px; margin-left: -2px; text-align: left; }
.doc.second { width: 157px; padding-left: 17px; text-align: left; }
.doc-active {
  display: flex;
  align-items: center;
  gap: 18px;
  width: 173px;
  height: 48px;
  padding-left: 33px;
  background: #3b4453;
  clip-path: polygon(20px 0, 100% 0, calc(100% - 20px) 100%, 0 100%);
  font-size: 23px;
  font-weight: 700;
}
.new-tab { margin: 0 20px 0 17px; }

/* Model space */
.viewport { position: relative; flex: 1; min-height: 0; background: #212830; }
.view-style { position: absolute; top: 5px; left: -3px; }
.canvas { width: 100%; height: 100%; }

/* Command line */
.command { display: flex; flex: none; height: 102px; }
.grip { width: 38px; background: #2a303d; border-right: 2px solid #222933; }
.console {
  flex: 1;
  display: flex;
  flex-direction: column;
  gap: 2px;
  padding: 2px 0;
  font-family: "DejaVu Sans Mono", monospace;
  font-size: 23px;
}
.history {
  display: flex;
  flex-direction: column;
  justify-content: flex-end;
  height: 56px;
  padding: 0 0 3px 4px;
  overflow: hidden;
  background: #969798;
  color: #0b0b0b;
}
.history p { margin: 0; line-height: 31px; flex: none; }
.prompt { display: flex; align-items: center; gap: 13px; height: 40px; padding-left: 8px; background: #bbbcbe; }
.prompt input { flex: 1; height: 40px; font-style: italic; color: #333; }
.prompt input::placeholder { color: #6c6d6f; opacity: 1; }

/* Status bar */
.status {
  display: flex;
  justify-content: space-between;
  flex: none;
  height: 20px;
  border-top: 8px solid #3b4453;
  overflow: hidden;
}
.modes { display: flex; padding-top: 4px; margin-right: -23px; }
.modes span { display: flex; flex: none; gap: 4px; padding: 2px 2px 0; margin-right: 6px; background: #3b4453; }
.modes .tight { margin-right: 2px; }
.modes b { width: 44px; background: #5e8dc0; }
.w48 { width: 48px; }
.w80 { width: 80px; }
.w95 { width: 95px; }
.w208 { width: 208px; }
.w212 { width: 212px; }
```
